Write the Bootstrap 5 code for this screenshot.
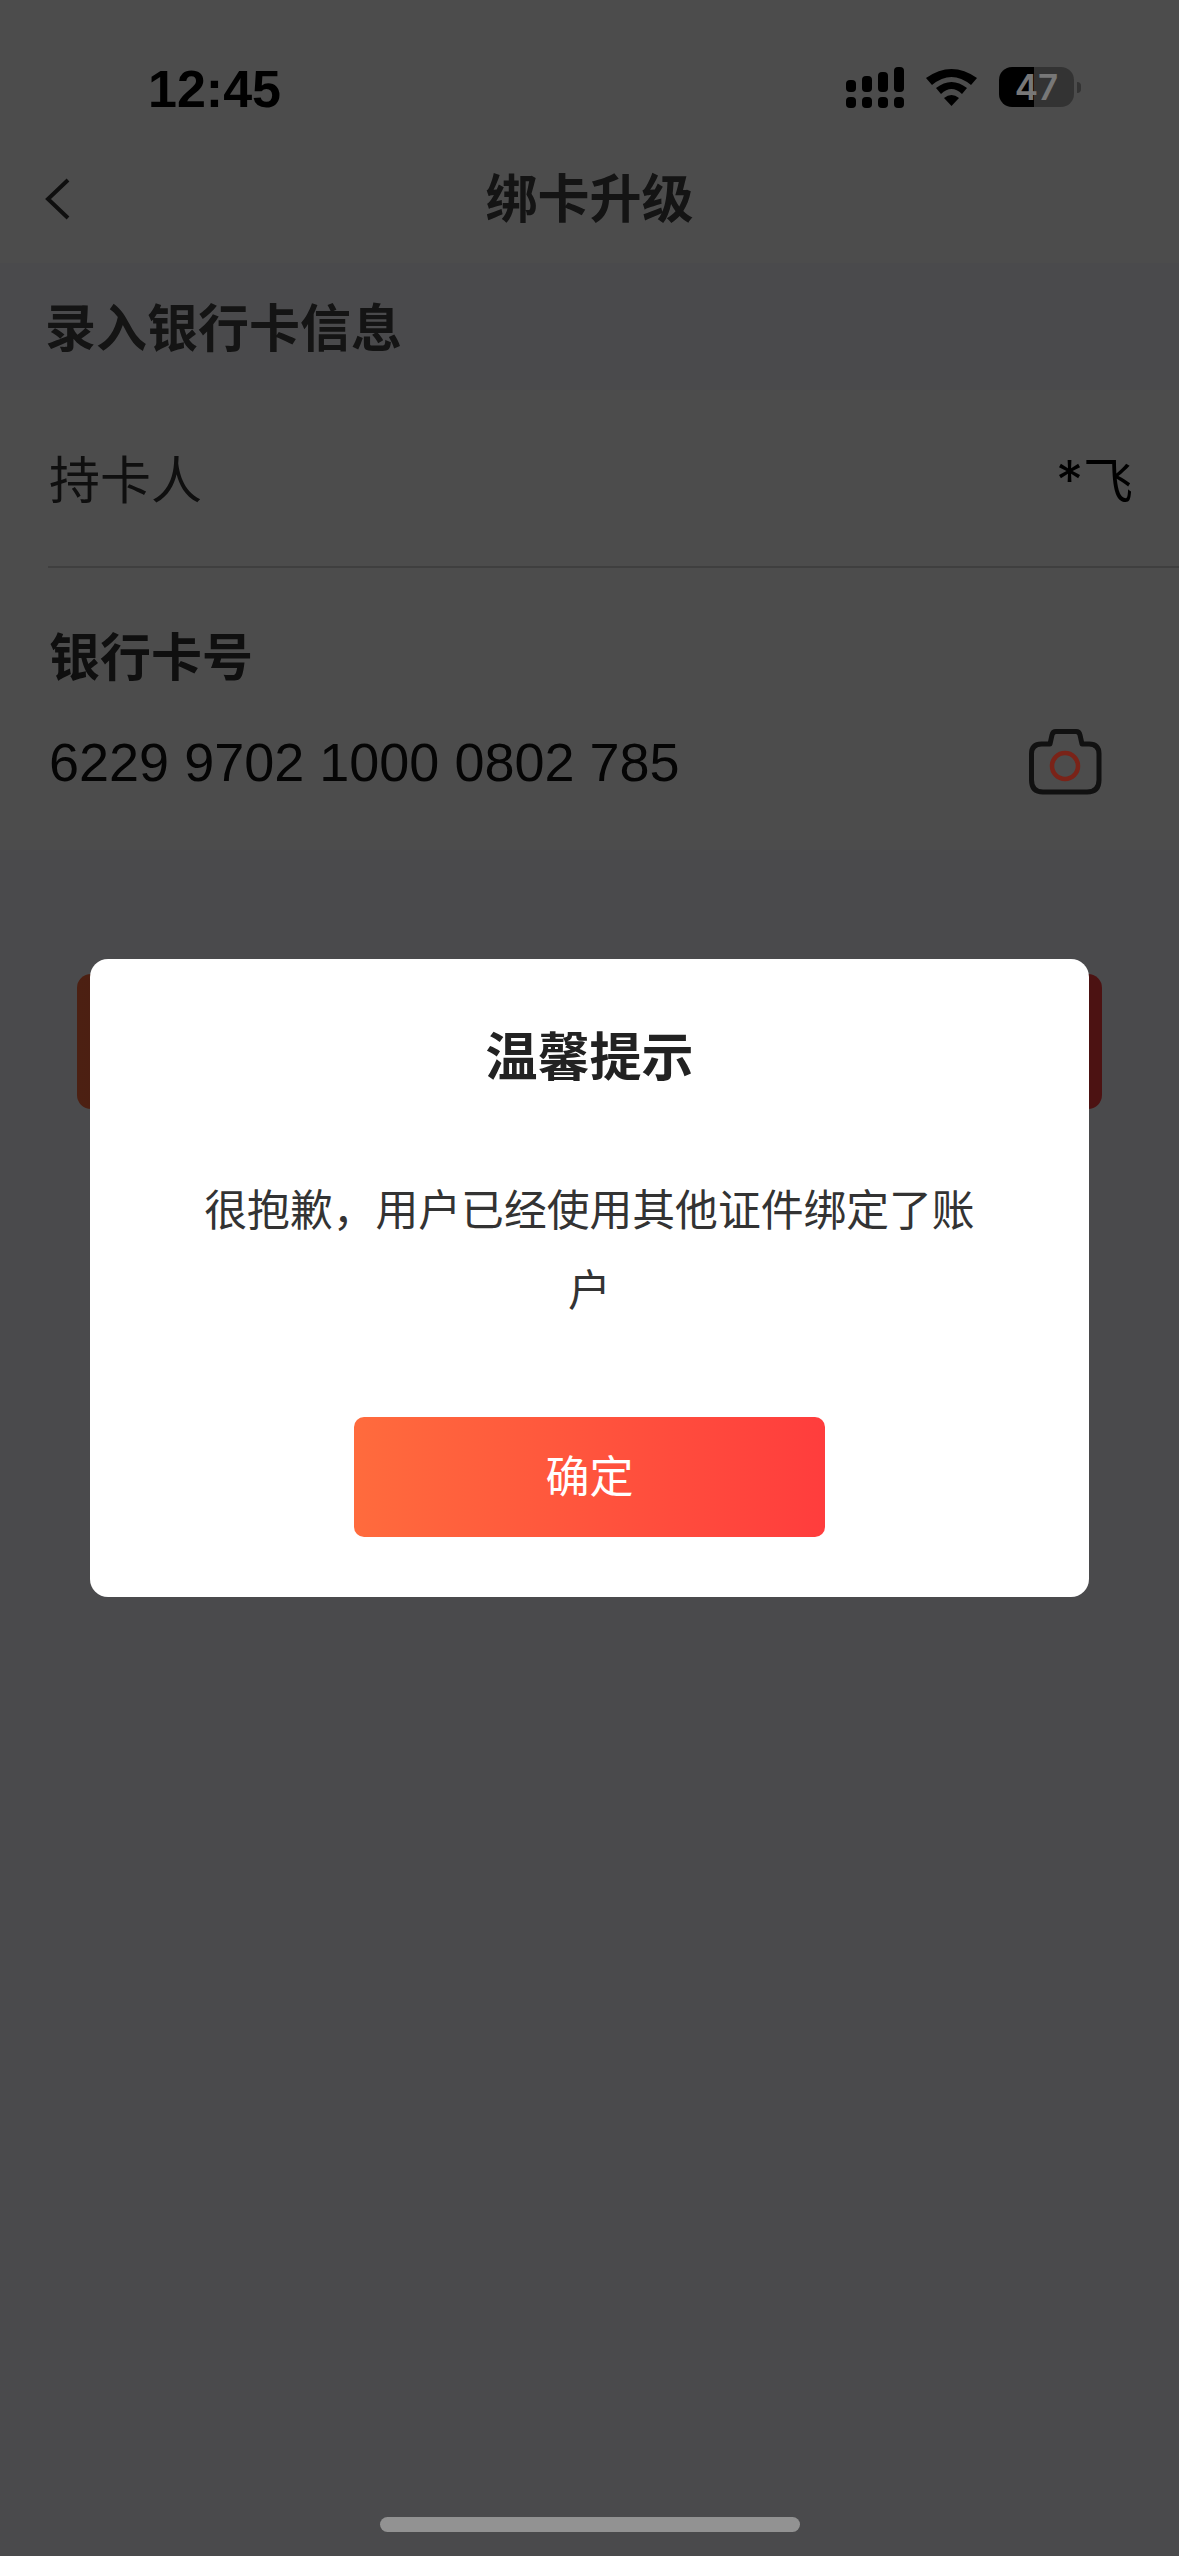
<!DOCTYPE html>
<html lang="zh">
<head>
<meta charset="utf-8">
<title>绑卡升级</title>
<link href="https://cdn.jsdelivr.net/npm/bootstrap@5.3.0/dist/css/bootstrap.min.css" rel="stylesheet">
<style>
html,body{height:100%;margin:0}
body{background:#f9f9ff;font-family:"Liberation Sans","Noto Sans CJK SC",sans-serif;color:#222;overflow:hidden}
.app-shell{position:relative;width:1179px;height:2556px;overflow:hidden}
.top-zone{height:263px;background:#fff;padding-top:135px}
.nav-line{height:128px;position:relative}
.nav-title{font-size:52px;font-weight:700;color:#444;line-height:1;padding-top:39px}
.back-icon{position:absolute;left:44px;top:42px}
.sec-head{height:127px;font-size:51px;font-weight:700;color:#444;padding-left:45px;line-height:133px}
.panel{background:#fff;height:460px}
.holder-row{height:178px;margin-left:48px;border-bottom:2px solid #d4d4d4;padding:8px 46px 0 1px;font-size:51px;color:#333}
.holder-row .val{color:#000;font-size:50px}
.holder-row .star{font-family:"Inter",sans-serif;font-size:54px;line-height:1}
.card-label{font-size:51px;font-weight:700;color:#333;padding:63px 0 0 49px;line-height:56px}
.card-line{padding:44px 46px 0 49px;height:99px}
.card-num{font-size:54px;color:#111;line-height:62px;letter-spacing:0}
.cam-icon{position:relative;z-index:1;margin-right:31px;margin-top:-2px}
.main-btn{height:135px;margin:124px 77px 0;border-radius:14px;background:linear-gradient(90deg,#ff6b3d,#ff3d3d)}
.scrim{position:absolute;inset:0;background:#000;opacity:.7}
.status-zone{position:absolute;left:0;right:0;top:0;height:135px}
.clock{position:absolute;left:148px;top:60px;font-size:52px;font-weight:700;color:#000;line-height:58px}
.sig-svg{position:absolute;left:846px;top:67px}
.batt{position:absolute;left:999px;top:67px;width:75px;height:40px;border-radius:13px;background:linear-gradient(90deg,#000 47%,#333 47%);color:#777;font:600 35px/40px "Inter",sans-serif;text-align:center}
.batt-nub{position:absolute;left:1077px;top:82px;width:4px;height:11px;background:#333;border-radius:0 4px 4px 0}
.dlg{position:absolute;left:90px;top:959px;width:999px;height:638px;background:#fff;border:0;border-radius:18px}
.dlg-title{font-size:52px;font-weight:700;color:#222;line-height:60px;padding-top:69px}
.dlg-text{font-size:42.8px;color:#333;line-height:80px;width:790px;margin:83px auto 0}
.dlg-btn{width:471px;height:120px;margin-top:86px;border:0;border-radius:10px;padding-top:8px;background:linear-gradient(90deg,#ff6b3d,#ff3d3d);color:#fff;font-size:44px}
.home-bar{position:absolute;left:380px;top:2517px;width:420px;height:15px;border-radius:8px;background:#929292}
</style>
</head>
<body>
<div class="app-shell">
  <div class="top-zone">
    <div class="nav-line text-center">
      <svg class="back-icon" width="28" height="44" viewBox="0 0 28 44"><path d="M24 3 4 22l20 19" fill="none" stroke="#333" stroke-width="4"/></svg>
      <div class="nav-title">绑卡升级</div>
    </div>
  </div>
  <div class="sec-head">录入银行卡信息</div>
  <div class="panel">
    <div class="holder-row d-flex justify-content-between align-items-center">
      <span>持卡人</span><span class="val"><span class="star">*</span>飞</span>
    </div>
    <div class="card-label">银行卡号</div>
    <div class="card-line d-flex justify-content-between align-items-start">
      <span class="card-num">6229 9702 1000 0802 785</span>
      <svg class="cam-icon" width="73" height="66" viewBox="0 0 73 66"><path d="M21 15l2-9q.8-3.500 4-3.500h20q3.200 0 4 3.500l2 9h7q10 0 10 10v26q0 12-12 12H14q-11.500 0-11.500-12V25q0-10 10-10z" fill="none" stroke="#111" stroke-width="5" stroke-linejoin="round"/><circle cx="36" cy="37" r="13" fill="none" stroke="#7a2318" stroke-width="4.500"/></svg>
    </div>
  </div>
  <div class="main-btn"></div>
  <div class="scrim"></div>
  <div class="status-zone">
    <div class="clock">12:45</div>
    <svg class="sig-svg" width="135" height="42" viewBox="0 0 135 42">
      <rect x="0" y="13" width="10" height="12" rx="4"/><rect x="16" y="9" width="10" height="16" rx="4"/><rect x="32" y="5" width="10" height="20" rx="4"/><rect x="48" y="0" width="10" height="25" rx="4"/>
      <rect x="0" y="30" width="10" height="11" rx="4"/><rect x="16" y="30" width="10" height="11" rx="4"/><rect x="32" y="30" width="10" height="11" rx="4"/><rect x="48" y="30" width="10" height="11" rx="4"/>
      <g transform="translate(80 2)"><path d="M0 9Q25.500-9 51 9l-6 7Q25.500 0 6 16zM10 19Q25.500 7 41 19l-5 6Q25.500 15 15 25zM18 29Q25.500 23 33 29l-7.500 8z"/></g>
    </svg>
    <div class="batt">47</div>
    <div class="batt-nub"></div>
  </div>
  <div class="dlg text-center">
    <div class="dlg-title">温馨提示</div>
    <div class="dlg-text">很抱歉，用户已经使用其他证件绑定了账户</div>
    <button type="button" class="btn dlg-btn">确定</button>
  </div>
  <div class="home-bar"></div>
</div>
<script src="https://cdn.jsdelivr.net/npm/bootstrap@5.3.0/dist/js/bootstrap.bundle.min.js"></script>
</body>
</html>
